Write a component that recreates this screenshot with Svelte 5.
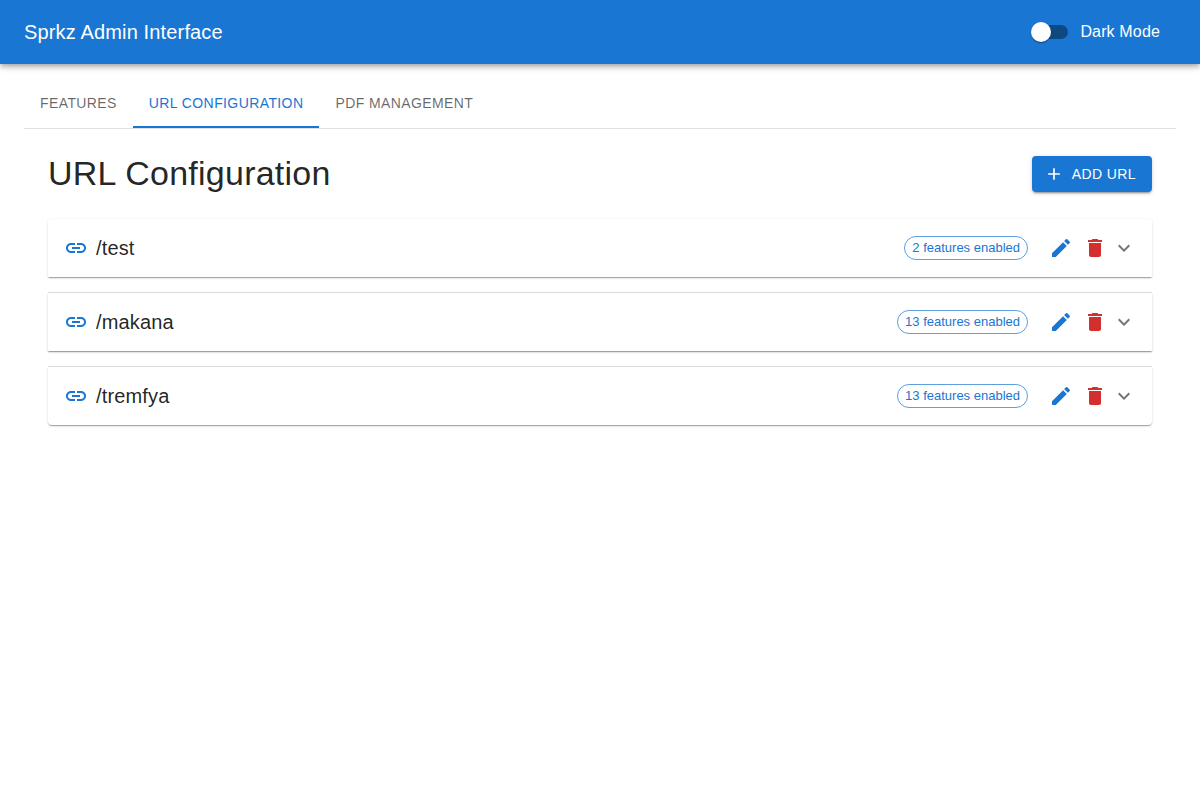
<script>
  const tabs = ['Features', 'URL Configuration', 'PDF Management'];
  const active = 1;
  const urls = [
    { path: '/test', count: 2 },
    { path: '/makana', count: 13 },
    { path: '/tremfya', count: 13 }
  ];
</script>

<header>
  <h1>Sprkz Admin Interface</h1>
  <div class="mode">
    <span class="switch"><span class="track"></span><span class="thumb"></span></span>
    <span>Dark Mode</span>
  </div>
</header>

<main>
  <nav>
    {#each tabs as tab, i}
      <button class="tab" class:active={i === active}>{tab}</button>
    {/each}
  </nav>
  <section>
    <div class="head">
      <h2>URL Configuration</h2>
      <button class="add">
        <svg width="20" height="20" viewBox="0 0 24 24"><path d="M19 13h-6v6h-2v-6H5v-2h6V5h2v6h6z" /></svg>
        Add URL
      </button>
    </div>
    <div class="list">
      {#each urls as u}
        <div class="item">
          <svg class="link" viewBox="0 0 24 24"><path d="M3.9 12c0-1.71 1.39-3.1 3.1-3.1h4V7H7c-2.76 0-5 2.24-5 5s2.24 5 5 5h4v-1.9H7c-1.71 0-3.1-1.39-3.1-3.1M8 13h8v-2H8zm9-6h-4v1.9h4c1.71 0 3.1 1.39 3.1 3.1s-1.39 3.1-3.1 3.1h-4V17h4c2.76 0 5-2.24 5-5s-2.24-5-5-5" /></svg>
          <h3>{u.path}</h3>
          <span class="chip">{u.count} features enabled</span>
          <svg class="edit" viewBox="0 0 24 24"><path d="M3 17.25V21h3.75L17.81 9.94l-3.75-3.75zM20.71 7.04c.39-.39.39-1.02 0-1.41l-2.34-2.34a.9959.9959 0 0 0-1.41 0l-1.83 1.83 3.75 3.75z" /></svg>
          <svg class="delete" viewBox="0 0 24 24"><path d="M6 19c0 1.1.9 2 2 2h8c1.1 0 2-.9 2-2V7H6zM19 4h-3.5l-1-1h-5l-1 1H5v2h14z" /></svg>
          <svg class="expand" viewBox="0 0 24 24"><path d="M16.59 8.59 12 13.17 7.41 8.59 6 10l6 6 6-6z" /></svg>
        </div>
      {/each}
    </div>
  </section>
</main>

<style>
  :global(body) {
    background: #fff;
    color: rgba(0, 0, 0, 0.87);
    font-family: "Liberation Sans", Arial, sans-serif;
    -webkit-font-smoothing: antialiased;
  }
  h1, h2, h3 { margin: 0; font-weight: 400; }
  button { font-family: inherit; border: 0; cursor: pointer; text-transform: uppercase; }
  svg { width: 24px; height: 24px; fill: currentColor; flex: none; display: block; }
  header {
    height: 64px;
    box-sizing: border-box;
    padding: 0 24px;
    display: flex;
    align-items: center;
    justify-content: space-between;
    background: #1976d2;
    color: #fff;
    position: relative;
    box-shadow: 0 2px 4px -1px rgba(0,0,0,.2), 0 4px 5px 0 rgba(0,0,0,.14), 0 1px 10px 0 rgba(0,0,0,.12);
  }
  h1 { font-size: 20px; line-height: 32px; letter-spacing: 0.15px; }
  .mode { display: flex; align-items: center; margin-right: 16px; font-size: 16px; line-height: 24px; letter-spacing: 0.15008px; }
  .switch { position: relative; width: 58px; height: 38px; padding: 12px; box-sizing: border-box; }
  .track { display: block; height: 14px; border-radius: 7px; background: #000; opacity: 0.38; }
  .thumb {
    position: absolute; left: 9px; top: 9px; width: 20px; height: 20px; border-radius: 50%; background: #fff;
    box-shadow: 0 2px 1px -1px rgba(0,0,0,.2), 0 1px 1px 0 rgba(0,0,0,.14), 0 1px 3px 0 rgba(0,0,0,.12);
  }
  main { padding: 16px 24px 0; }
  nav { display: flex; border-bottom: 1px solid rgba(0,0,0,.12); }
  .tab {
    height: 48px; padding: 2px 16px 0; background: none; color: rgba(0,0,0,.6);
    font-size: 14px; line-height: 17.5px; letter-spacing: 0.39998px;
    border-bottom: 2px solid transparent;
  }
  .active { color: #1976d2; border-bottom-color: #1976d2; }
  section { padding: 24px; }
  .head { display: flex; align-items: center; justify-content: space-between; height: 42px; margin-bottom: 24px; }
  h2 { font-size: 34px; line-height: 42px; letter-spacing: 0.25px; padding-bottom: 2px; }
  .add {
    display: flex; align-items: center; gap: 8px; height: 36px; padding: 0 16px 0 12px; border-radius: 4px;
    background: #1976d2; color: #fff; font-size: 14px; line-height: 24.5px; letter-spacing: 0.39998px;
    box-shadow: 0 3px 1px -2px rgba(0,0,0,.2), 0 2px 2px 0 rgba(0,0,0,.14), 0 1px 5px 0 rgba(0,0,0,.12);
  }
  .add svg { width: 20px; height: 20px; }
  .list { display: flex; flex-direction: column; gap: 16px; }
  .item {
    position: relative; display: flex; align-items: center; height: 58px; padding: 0 16px; background: #fff;
    box-shadow: 0 2px 1px -1px rgba(0,0,0,.2), 0 1px 1px 0 rgba(0,0,0,.14), 0 1px 3px 0 rgba(0,0,0,.12);
  }
  .item:first-child { border-radius: 4px 4px 0 0; }
  .item:last-child { border-radius: 0 0 4px 4px; }
  .item + .item::before { content: ''; position: absolute; left: 0; right: 0; top: -1px; height: 1px; background: rgba(0,0,0,.12); }
  .link, .edit { color: #1976d2; }
  h3 { flex: 1; margin-left: 8px; font-size: 20px; line-height: 32px; letter-spacing: 0.15px; }
  .chip {
    height: 24px; box-sizing: border-box; padding: 0 7px; border: 1px solid rgba(25,118,210,.7); border-radius: 16px;
    font-size: 13px; line-height: 21px; color: #1976d2;
  }
  .edit { margin-left: 21px; }
  .delete { margin-left: 10px; color: #d32f2f; }
  .expand { margin-left: 5px; color: rgba(0,0,0,.54); }
</style>
